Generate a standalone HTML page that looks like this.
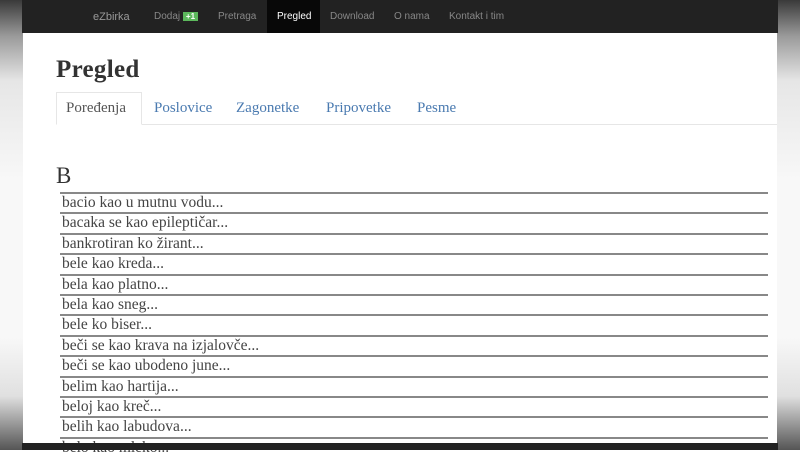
<!DOCTYPE html>
<html><head><meta charset="utf-8"><style>
*{margin:0;padding:0;box-sizing:border-box}
body{width:800px;height:450px;overflow:hidden;background:#fff;position:relative;font-family:"Liberation Serif",serif}
.side{position:absolute;top:0;width:23px;height:450px;background:linear-gradient(#3a3a3a 0%,#9a9a9a 8%,#e6e6e6 18%,#f8f8f8 40%,#f8f8f8 75%,#e0e0e0 88%,#555 100%)}
.nav{position:absolute;left:22px;top:0;width:756px;height:33px;background:#222}
.nav span{position:absolute;top:11px;font:10px "Liberation Sans",sans-serif;color:#888}
.act{position:absolute;left:245px;top:0;width:53px;height:33px;background:#080808}
h1{position:absolute;left:56px;top:56px;font:bold 25px "Liberation Serif",serif;color:#333;letter-spacing:0.3px}
.tabline{position:absolute;left:56px;top:124px;width:721px;height:1px;background:#e6e6e6}
.tab{position:absolute;left:56px;top:92px;width:86px;height:33px;border:1px solid #e6e6e6;border-bottom-color:#fff;background:#fff}
.t{position:absolute;top:100px;font-size:15px;color:#4a7ab0}
.B{position:absolute;left:56px;top:163px;font-size:23px;color:#333}
.row{position:absolute;left:60px;width:708px;height:20.4px;border-top:2px solid #888;font-size:15.5px;color:#444;padding-left:2px;line-height:18px}
.bot{position:absolute;left:22px;top:443px;width:756px;height:7px;background:#222}
</style></head><body>
<div class="side" style="left:0"></div><div class="side" style="left:777px"></div>
<div class="nav"><div class="act"></div>
<span style="left:71px;font-size:11px;color:#999">eZbirka</span>
<span style="left:132px">Dodaj <b style="background:#5cb85c;color:#fff;font-size:8px;padding:0 3px">+1</b></span>
<span style="left:196px">Pretraga</span>
<span style="left:255px;color:#fff">Pregled</span>
<span style="left:308px">Download</span>
<span style="left:372px">O nama</span>
<span style="left:427px">Kontakt i tim</span>
</div>
<h1>Pregled</h1>
<div class="tabline"></div><div class="tab"></div>
<span class="t" style="left:66px;color:#555">Poređenja</span>
<span class="t" style="left:154px">Poslovice</span>
<span class="t" style="left:236px">Zagonetke</span>
<span class="t" style="left:326px">Pripovetke</span>
<span class="t" style="left:417px">Pesme</span>
<div class="B">B</div>
<div class="row" style="top:192px">bacio kao u mutnu vodu...</div>
<div class="row" style="top:212.4px">bacaka se kao epileptičar...</div>
<div class="row" style="top:232.8px">bankrotiran ko žirant...</div>
<div class="row" style="top:253.2px">bele kao kreda...</div>
<div class="row" style="top:273.6px">bela kao platno...</div>
<div class="row" style="top:294px">bela kao sneg...</div>
<div class="row" style="top:314.4px">bele ko biser...</div>
<div class="row" style="top:334.8px">beči se kao krava na izjalovče...</div>
<div class="row" style="top:355.2px">beči se kao ubodeno june...</div>
<div class="row" style="top:375.6px">belim kao hartija...</div>
<div class="row" style="top:396px">beloj kao kreč...</div>
<div class="row" style="top:416.4px">belih kao labudova...</div>
<div class="row" style="top:436.8px">belo kao mleko...</div>
<div class="bot"></div>
</body></html>
